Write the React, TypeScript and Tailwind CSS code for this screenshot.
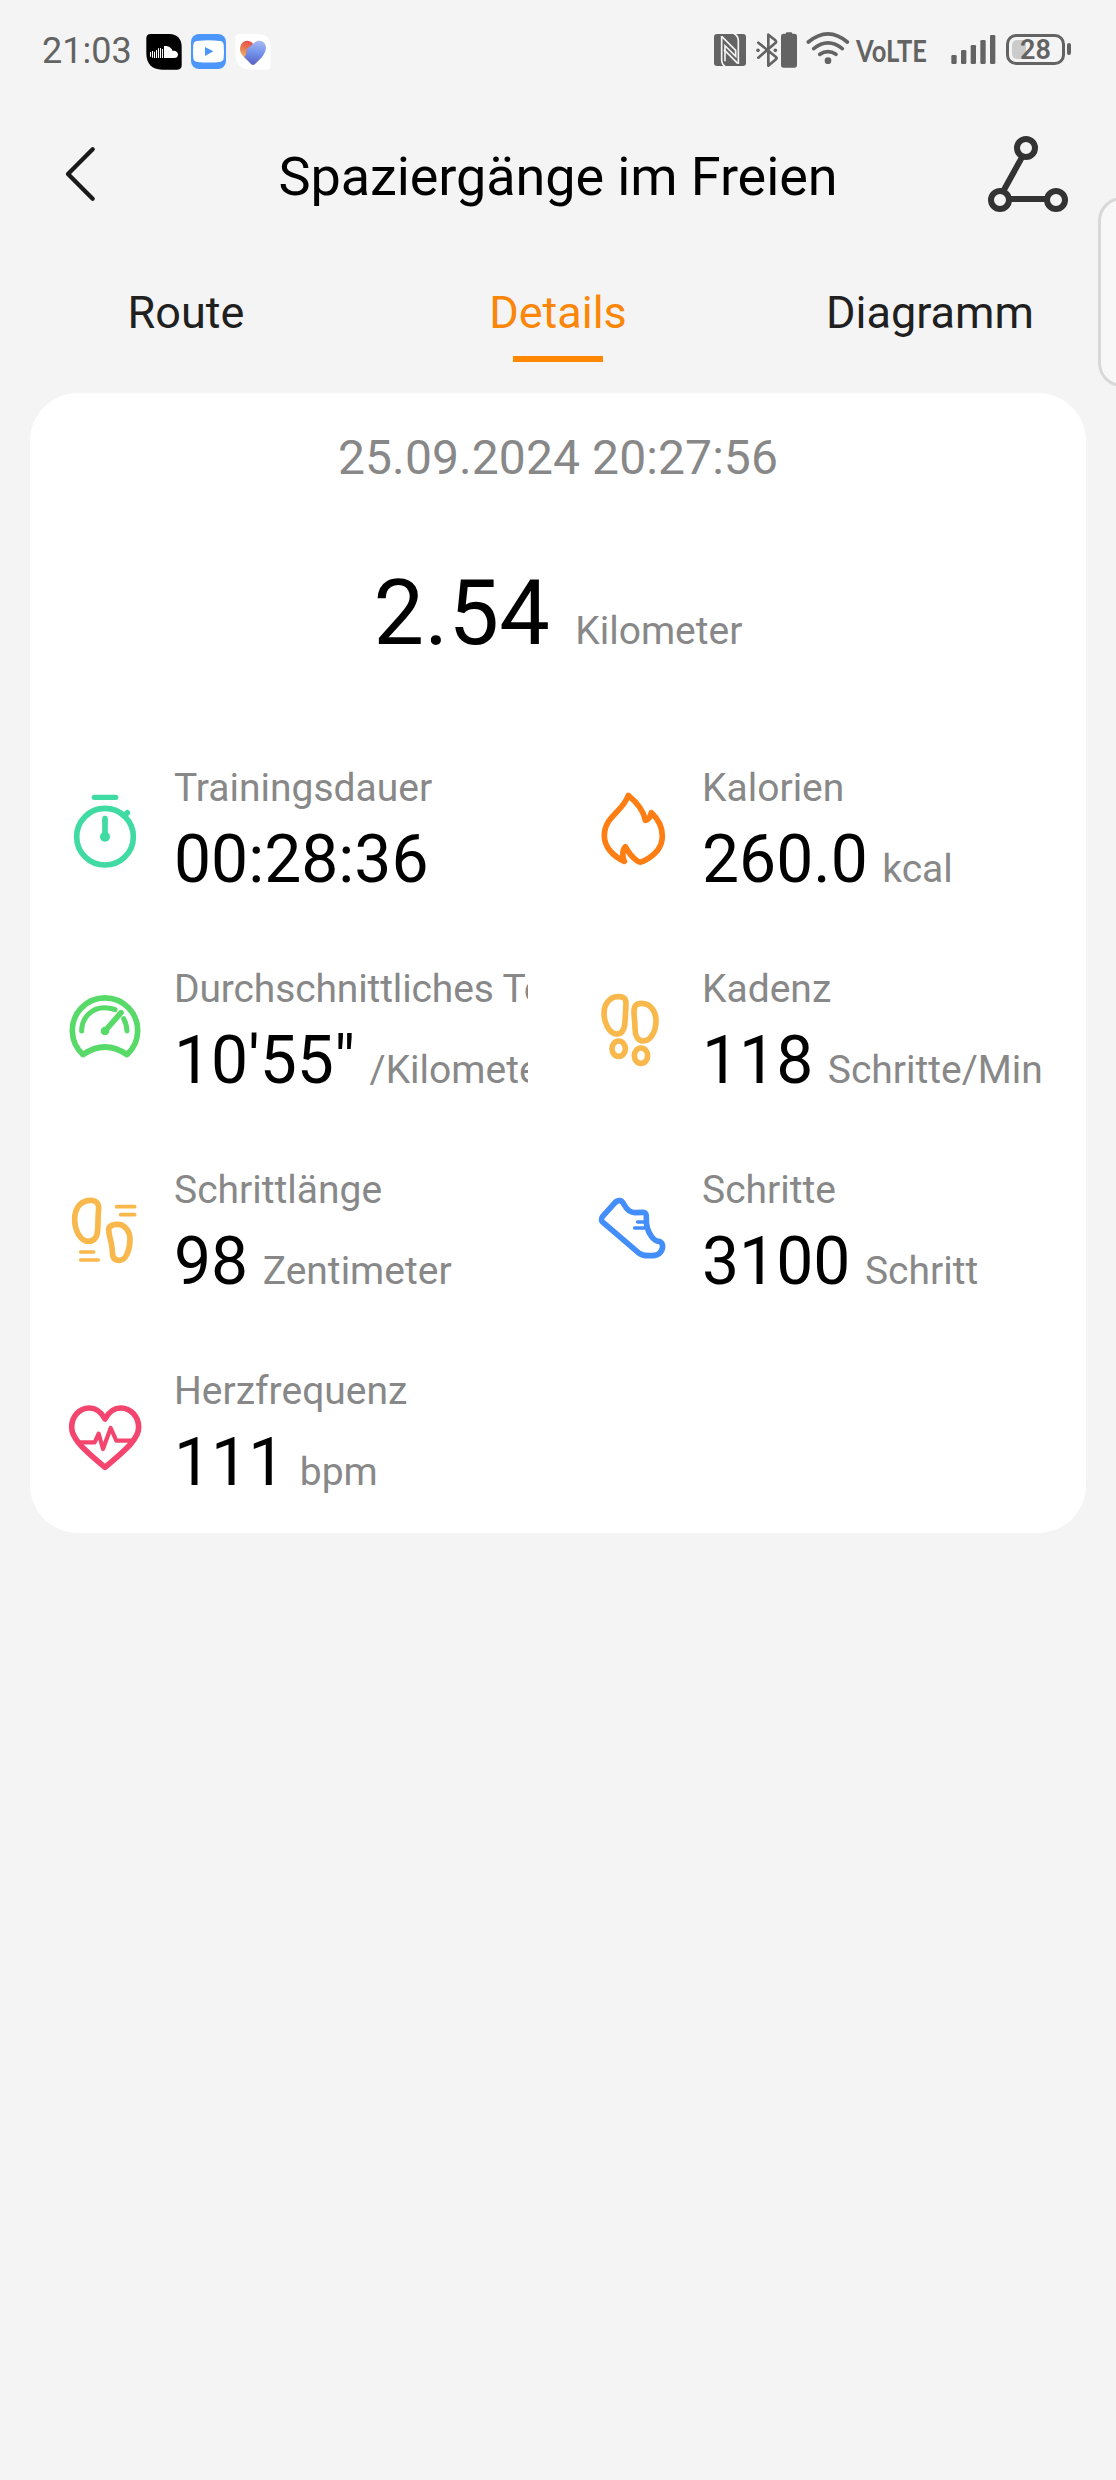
import type { ReactNode } from "react";

const GREY = "#636363";

function StatusBar() {
  return (
    <div className="flex h-[102px] items-center pl-[42px] pr-[45px] text-[#636363]">
      <span className="w-[104px] text-[36px] leading-[42px]">21:03</span>
      <svg className="h-10 w-[36px]" viewBox="438 93 108 120">
        <path d="M452 102H508C532 102 545 118 545 140V196Q545 209 532 209H486C456 209 439 192 439 160V115Q439 102 452 102Z" fill="#000" />
        <g stroke="#fff" strokeWidth="3.2">
          <path d="M451.500 156V170M457.500 153V173M463.500 155V174M469.500 150V174M475.500 145V174M481.500 144V174M487.500 147V174" />
        </g>
        <path d="M492 138C505 136 515 143 518 153C527 151 534 157 534 164C534 170 529 174 523 174H492Z" fill="#fff" />
      </svg>
      <svg className="ml-[9px] h-10 w-[35px]" viewBox="573 93 105 120">
        <rect x="573" y="102" width="105" height="105" rx="24" fill="#4c97fb" />
        <path d="M592 123Q626 119 659 123Q670 124 671 134Q673 154 671 175Q670 185 659 186Q626 189 592 186Q581 185 580 175Q578 154 580 134Q581 124 592 123Z" fill="#fff" />
        <path d="M615 141L640 154L615 168Z" fill="#4c97fb" />
      </svg>
      <svg className="ml-[9px] h-10 w-[36px]" viewBox="705 93 108 120">
        <defs>
          <linearGradient id="heartBlue" x1="0.5" y1="0" x2="0.4" y2="1">
            <stop offset="0" stopColor="#a5b8f3" />
            <stop offset="0.5" stopColor="#7191ea" />
            <stop offset="1" stopColor="#5a62c4" />
          </linearGradient>
          <linearGradient id="heartWarm" x1="0.7" y1="0" x2="0.4" y2="1">
            <stop offset="0" stopColor="#e2454c" />
            <stop offset="0.4" stopColor="#e8764f" />
            <stop offset="0.7" stopColor="#eca867" />
            <stop offset="1" stopColor="#7b84d8" />
          </linearGradient>
        </defs>
        <path d="M718 102H775C800 102 812 118 812 140V197Q812 209 799 209H752C722 209 706 192 706 160V115Q706 102 718 102Z" fill="#fff" />
        <path d="M759 131C748 118 730 120 723 134C716 149 722 162 734 173L759 195L790 160Z" fill="url(#heartWarm)" />
        <path d="M740 148L763 128C775 119 791 121 796 134C801 148 795 160 784 173L766 191Q759 198 752 191L733 171Q742 162 740 148Z" fill="url(#heartBlue)" />
      </svg>

      <div className="ml-auto flex items-center">
        <svg className="h-10 w-8" viewBox="42 93 96 120">
          <rect x="42" y="102" width="96" height="96" rx="9" fill={GREY} />
          <g fill="none" stroke="#f4f4f4" strokeWidth="5">
            <path d="M65 108V180Q65 193 76 200" />
            <path d="M115 192V122Q115 107 102 101" />
            <path d="M65 109L107 151V169L75 137V184" />
            <path d="M72 149L113 190" />
          </g>
        </svg>
        <svg className="ml-[10px] h-10 w-[22px]" viewBox="168 93 66 120">
          <path d="M175 128L228 171Q232 174 228 178L205 197V104L226 121Q230 125 226 129L175 173" fill="none" stroke={GREY} strokeWidth="8" strokeLinecap="round" strokeLinejoin="round" />
          <circle cx="174" cy="151" r="5.500" fill={GREY} />
          <circle cx="226" cy="151" r="5.500" fill={GREY} />
        </svg>
        <svg className="ml-[3px] h-10 w-4" viewBox="243 93 48 120">
          <path d="M257 101Q257 97 262 97H272Q277 97 277 101H283Q291 101 291 109V195Q291 203 283 203H251Q243 203 243 195V109Q243 101 251 101Z" fill={GREY} />
        </svg>
        <svg className="ml-[9px] h-10 w-[44px]" viewBox="317 93 132 120">
          <g fill="none" stroke={GREY} strokeWidth="11" strokeLinecap="round">
            <path d="M324 126Q383 77 441 126" />
            <path d="M340 146Q383 111 426 146" />
            <path d="M358 163Q383 147 407 163" />
          </g>
          <circle cx="383" cy="182" r="10" fill={GREY} />
        </svg>
        <span className="mb-[3px] ml-[6px] w-[95px] origin-left scale-x-[0.85] font-[Lato] text-[30px] font-bold leading-10">VoLTE</span>
        <svg className="h-10 w-[45px]" viewBox="751 93 135 120">
          <g fill={GREY}>
            <rect x="752" y="165" width="16" height="27" rx="4" />
            <rect x="781" y="150" width="16" height="42" rx="4" />
            <rect x="810" y="135" width="16" height="57" rx="4" />
            <rect x="839" y="120" width="16" height="72" rx="4" />
            <rect x="868" y="105" width="16" height="87" rx="4" />
          </g>
        </svg>
        <div className="ml-[10px] flex items-center">
          <div className="mb-[4px] flex h-[31px] w-[59px] rounded-[10px] border-[3px] border-[#636363] p-[3px]">
            <div className="h-[19px] w-[14px] rounded-l-[5px] bg-[#cbcbcb]" />
            <span className="-ml-[6px] text-[27px] font-semibold leading-[20px]">28</span>
          </div>
          <div className="mb-[5px] ml-[2px] h-[12px] w-[4px] rounded-[2px] bg-[#636363]" />
        </div>
      </div>
    </div>
  );
}

function Header() {
  return (
    <header className="flex h-[144px] items-center justify-between">
      <button className="flex w-[130px] pl-[63px]" aria-label="Zurück">
        <svg className="h-[60px] w-[35px]" viewBox="189 432 105 180">
          <path d="M278 448L204 522L278 596" fill="none" stroke="#1a1a1a" strokeWidth="13" strokeLinecap="round" strokeLinejoin="round" />
        </svg>
      </button>
      <h1 className="pt-[5px] text-[54px] leading-[64px] tracking-[-0.1px] text-black">Spaziergänge im Freien</h1>
      <button className="flex w-[130px]" aria-label="Teilen">
        <svg className="h-[80px] w-[84px]" viewBox="858 402 252 240">
          <g fill="none" stroke="#333" strokeWidth="18">
            <path d="M967 470L910 573M932 597H1036" />
            <circle cx="978" cy="444" r="27" />
            <circle cx="900" cy="600" r="27" />
            <circle cx="1068" cy="600" r="27" />
          </g>
        </svg>
      </button>
    </header>
  );
}

const tabs = [
  { name: "Route", active: false },
  { name: "Details", active: true },
  { name: "Diagramm", active: false },
];

function Tabs() {
  return (
    <nav className="grid grid-cols-3 pt-[40px]">
      {tabs.map((t) => (
        <button key={t.name} className="flex flex-col items-center">
          <span className={t.active ? "text-[45px] leading-[54px] text-[#fb8608]" : "text-[45px] leading-[54px] text-[#202020]"}>{t.name}</span>
          <span className={t.active ? "mt-[16px] h-[6px] w-[90px] bg-[#ff8800]" : "mt-[16px] h-[6px] w-[90px]"} />
        </button>
      ))}
    </nav>
  );
}

function Icon({ box, color, children }: { box: string; color: string; children: ReactNode }) {
  return (
    <svg className="mt-[25px] ml-[30px] h-[90px] w-[90px] shrink-0" viewBox={box} fill="none" stroke={color} strokeWidth="17" strokeLinecap="round" strokeLinejoin="round">
      {children}
    </svg>
  );
}

const metrics = [
  {
    label: "Trainingsdauer", value: "00:28:36", unit: "",
    icon: (
      <Icon box="30 120 270 270" color="#3fdba3">
        <path d="M133 142H197" strokeWidth="16" />
        <circle cx="165" cy="260" r="85" />
        <path d="M165 206V260M222 198L232 188" />
        <circle cx="165" cy="260" r="15" fill="#3fdba3" stroke="none" />
      </Icon>
    ),
  },
  {
    label: "Kalorien", value: "260.0", unit: "kcal",
    icon: (
      <Icon box="24 120 270 270" color="#ff7e14">
        <path d="M145 136C168 155 191 180 196 211C208 209 210 199 214 188C235 208 247 232 247 258C247 295 222 318 189 334Q180 339 172 333C156 322 146 309 136 290C127 300 126 316 133 334C98 318 73 290 73 257C73 200 128 186 145 136Z" />
      </Icon>
    ),
  },
  {
    label: "Durchschnittliches Tempo", value: "10'55\"", unit: "/Kilometer",
    icon: (
      <Icon box="30 123 270 270" color="#58da68">
        <path d="M99 314A98 98 0 1 1 231 314Q165 268 99 314Z" />
        <path d="M95 243C95 202 126 173 163 173Q181 173 195 179" strokeWidth="15" />
        <path d="M221 206Q230 222 231 243" strokeWidth="15" />
        <path d="M165 243L213 188" />
        <circle cx="165" cy="243" r="13" fill="#58da68" stroke="none" />
      </Icon>
    ),
  },
  {
    label: "Kadenz", value: "118", unit: "Schritte/Min",
    icon: (
      <Icon box="24 123 270 270" color="#f9b84b">
        <path d="M113 140C132 139 138 146 138 160C137 185 136 205 134 225C131 244 122 253 109 252C87 249 72 218 72 190C72 161 90 141 113 140Z" />
        <ellipse cx="116" cy="296" rx="20" ry="23" />
        <path d="M185 160C211 160 228 184 228 212C228 246 211 273 190 273C172 273 165 255 165 235C165 215 162 200 162 185C162 166 170 160 185 160Z" />
        <ellipse cx="183" cy="317" rx="20" ry="23" />
      </Icon>
    ),
  },
  {
    label: "Schrittlänge", value: "98", unit: "Zentimeter",
    icon: (
      <Icon box="30 126 270 270" color="#f9b84b">
        <path d="M122 151C140 151 147 162 146 178C143 200 145 220 143 240C142 262 132 274 116 274C90 274 74 240 74 208C74 170 95 151 122 151Z" />
        <path d="M199 223C225 221 240 245 240 268C240 300 228 331 208 331C190 331 187 318 187 305C187 280 177 262 176 240C176 228 185 224 199 223Z" />
        <path d="M200 170H254M212 194H254M92 306H131M92 330H145" strokeWidth="11" />
      </Icon>
    ),
  },
  {
    label: "Schritte", value: "3100", unit: "Schritt",
    icon: (
      <Icon box="24 126 270 270" color="#438efb">
        <path d="M118 152C125 150 129 158 133 165C142 182 152 188 165 188L188 187C198 187 200 195 199 203C198 225 203 245 215 260C222 272 232 274 240 275C252 282 249 300 238 310C230 317 222 317 205 317C190 317 185 316 175 308L70 218C62 211 63 206 68 199L103 160C108 154 112 152 118 152Z" />
        <path d="M173 216H198M164 234H200" strokeWidth="11" />
      </Icon>
    ),
  },
  {
    label: "Herzfrequenz", value: "111", unit: "bpm",
    icon: (
      <Icon box="180 129 270 270" color="#f4456e">
        <path d="M315 207C305 188 290 174 267 174C238 174 215 200 215 232C215 265 247 295 315 352C383 295 416 265 416 232C416 200 392 174 363 174C340 174 325 188 315 207Z" />
        <path d="M232 277H284L296 251L309 297L332 234L349 272H400" strokeWidth="12.500" />
      </Icon>
    ),
  },
];

export default function App() {
  return (
    <div className="relative h-[2480px] w-[1116px] overflow-hidden bg-[#f4f4f4] font-[Roboto,sans-serif]">
      <StatusBar />
      <Header />
      <Tabs />
      <main className="mx-[30px] mt-[31px] h-[1140px] rounded-[48px] bg-white">
        <p className="pt-[37px] text-center text-[48px] leading-[56px] tracking-[0.1px] text-[#888]">25.09.2024 20:27:56</p>
        <div className="mt-[75px] flex h-[106px] items-baseline justify-center">
          <span className="text-[90px] leading-[106px] tracking-[0.3px] text-black">2.54</span>
          <span className="ml-[25px] text-[39px] leading-none text-[#888]">Kilometer</span>
        </div>
        <section className="mt-[98px] grid grid-cols-2">
          {metrics.map((m) => (
            <div key={m.label} className={m.label === "Herzfrequenz" ? "flex" : "flex h-[201px]"}>
              {m.icon}
              <div className="mr-[30px] ml-[24px] min-w-0 flex-1 overflow-hidden whitespace-nowrap">
                <p className={m.label.length > 20 ? "text-[39px] leading-[46px] tracking-[-0.13px] text-[#888]" : "text-[39px] leading-[46px] text-[#888]"}>{m.label}</p>
                <p className="mt-[10px] flex h-[78px] items-baseline">
                  <span className="text-[66px] leading-[78px] text-black">{m.value}</span>
                  <span className="ml-[14.5px] text-[39px] leading-none text-[#888]">{m.unit}</span>
                </p>
              </div>
            </div>
          ))}
        </section>
      </main>
      <div className="absolute top-[197px] -right-[30px] h-[190px] w-[48px] rounded-[30px] border-[3px] border-[#d8d8d8] bg-[#f8f8f8]" />
    </div>
  );
}
